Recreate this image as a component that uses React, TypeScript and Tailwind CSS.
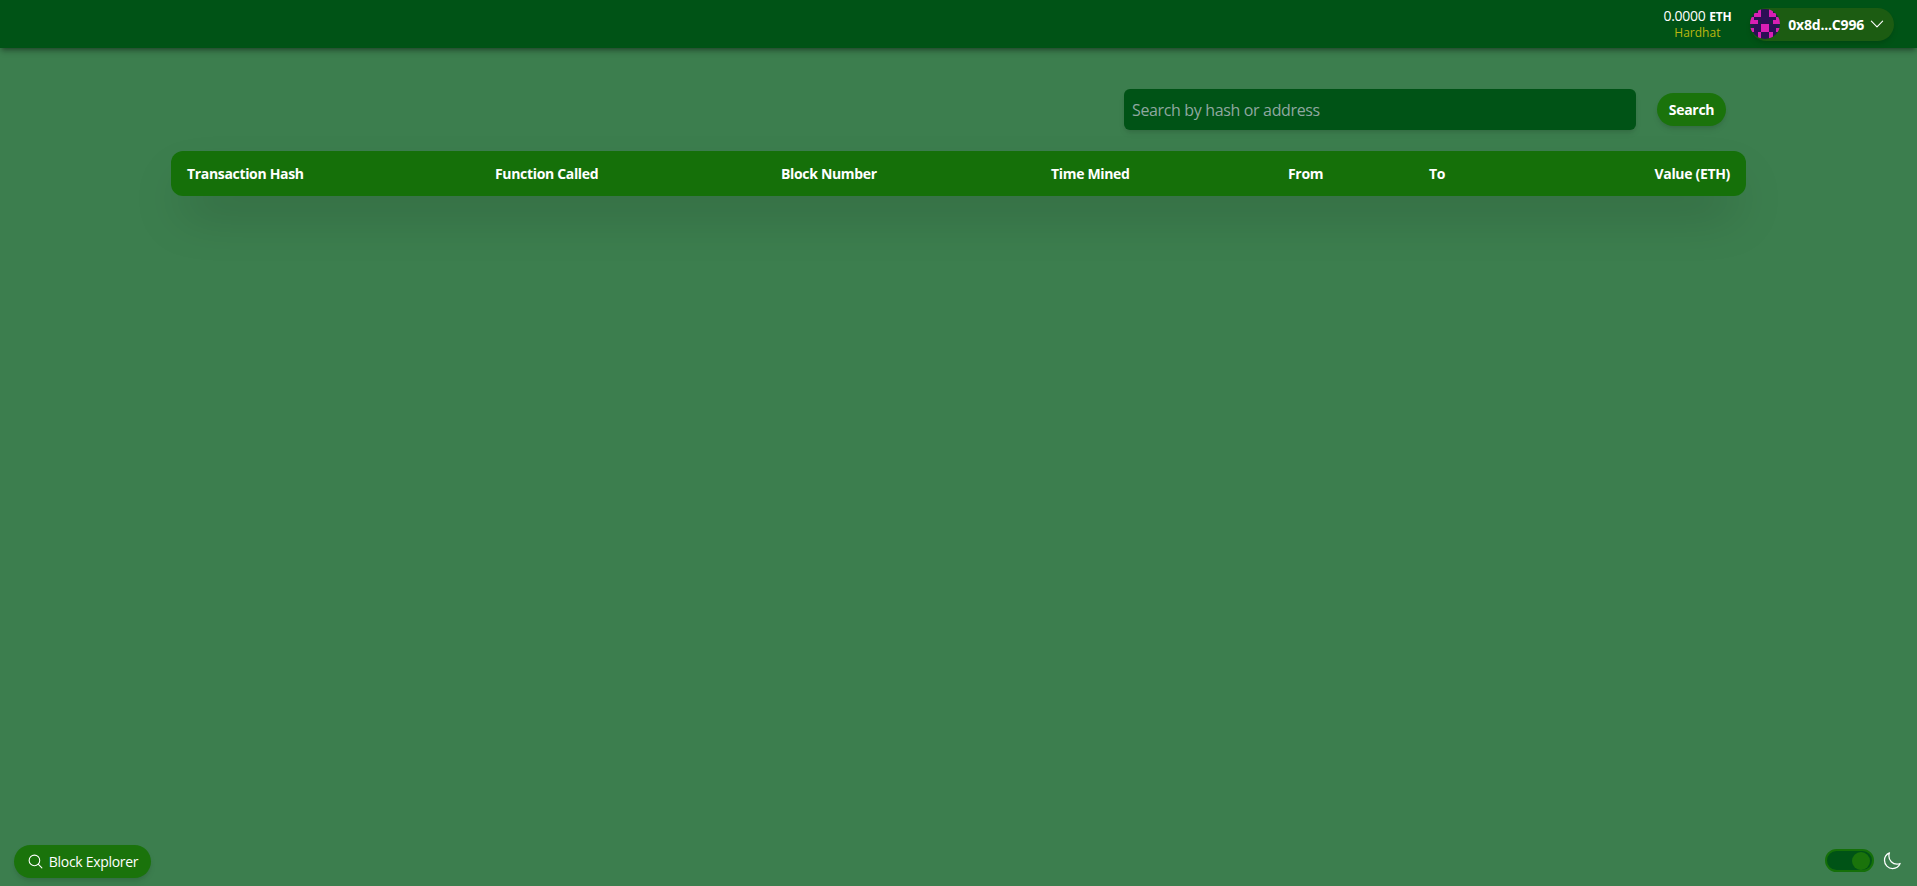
import { HiOutlineChevronDown, HiOutlineMagnifyingGlass, HiOutlineMoon } from 'react-icons/hi2';

const font = "font-['Open_Sans',sans-serif]";

// 8x8 identicon, 0 = bg, 1 = dark spot, 2 = magenta
const blockie = [
  [0, 0, 2, 1, 1, 2, 0, 0],
  [0, 2, 2, 1, 1, 2, 2, 0],
  [2, 1, 1, 1, 1, 1, 1, 2],
  [2, 2, 0, 1, 1, 0, 2, 2],
  [0, 1, 1, 2, 2, 1, 1, 0],
  [2, 1, 1, 2, 2, 1, 1, 2],
  [0, 1, 2, 1, 1, 2, 1, 0],
  [0, 0, 2, 1, 1, 2, 0, 0],
];
const blockieColors = ['#1b2145', '#2b0f55', '#d91fb4'];

function Blockie() {
  return (
    <svg viewBox="0 0 8 8" className="w-[30px] h-[30px] rounded-full" shapeRendering="crispEdges">
      {blockie.map((row, y) =>
        row.map((v, x) => <rect key={`${x}-${y}`} x={x} y={y} width="1" height="1" fill={blockieColors[v]} />),
      )}
    </svg>
  );
}

const columns = [
  { title: 'Transaction Hash', width: 'w-[308px]' },
  { title: 'Function Called', width: 'w-[286px]' },
  { title: 'Block Number', width: 'w-[270px]' },
  { title: 'Time Mined', width: 'w-[237px]' },
  { title: 'From', width: 'w-[141px]' },
  { title: 'To', width: '' },
];

export default function App() {
  return (
    <div className={`h-screen flex flex-col bg-[#3c7e4e] text-white overflow-hidden ${font}`}>
      {/* Header */}
      <header className="h-12 shrink-0 bg-[#005316] shadow-md shadow-black/30 flex items-center justify-end pr-[23px]">
        <div className="flex flex-col items-center mr-[19px]">
          <div className="flex items-baseline gap-[4px] leading-4 tracking-[-0.3px]">
            <span className="text-[14px]">0.0000</span>
            <span className="text-[12px] font-bold">ETH</span>
          </div>
          <span className="text-[12px] leading-4 text-[#bcb80f]">Hardhat</span>
        </div>
        <button className="h-[33px] flex items-center rounded-full bg-[#1c5c12] pr-[8px] shadow-md">
          <Blockie />
          <span className="ml-[8px] text-[14px] font-bold tracking-[-0.2px]">0x8d...C996</span>
          <HiOutlineChevronDown className="ml-[4px] w-[18px] h-[18px]" />
        </button>
      </header>

      {/* Main */}
      <main className="flex-1 flex flex-col px-[171px] pt-[41px]">
        <div className="flex items-center justify-end pr-[20px]">
          <input
            placeholder="Search by hash or address"
            className="w-[512px] h-[41px] rounded-md bg-[#005316] px-2 text-base tracking-[-0.35px] shadow-md outline-none placeholder:text-[#8fa8a0]"
          />
          <button className="ml-[21px] h-[33px] w-[69px] rounded-full bg-[#1a730b] text-[14px] font-bold tracking-[-0.3px] shadow-md">
            Search
          </button>
        </div>

        <table className="mt-[21px] w-full table-fixed rounded-xl overflow-hidden shadow-2xl">
          <thead>
            <tr className="h-[45px] bg-[#157009] text-[14px] font-bold tracking-[-0.33px] text-left">
              {columns.map((col) => (
                <th key={col.title} className={`px-4 ${col.width}`}>{col.title}</th>
              ))}
              <th className="px-4 text-right w-[180px]">Value (ETH)</th>
            </tr>
          </thead>
        </table>
      </main>

      {/* Footer */}
      <footer className="shrink-0 h-[41px] flex items-start justify-between pl-[14px] pr-[15px]">
        <button className="h-[33px] w-[137px] flex items-center justify-center gap-[5px] rounded-full bg-[#1a730b] text-[14px] tracking-[-0.3px] shadow-md">
          <HiOutlineMagnifyingGlass className="w-[17px] h-[17px]" />
          Block Explorer
        </button>
        <div className="flex items-center gap-[8px] mt-[4px]">
          <div className="w-[49px] h-[23px] rounded-full bg-[#005316] border-2 border-[#157009] flex items-center justify-end pr-[2px]">
            <div className="w-[18px] h-[18px] rounded-full bg-[#1a730b]" />
          </div>
          <HiOutlineMoon className="w-5 h-5" />
        </div>
      </footer>
    </div>
  );
}
